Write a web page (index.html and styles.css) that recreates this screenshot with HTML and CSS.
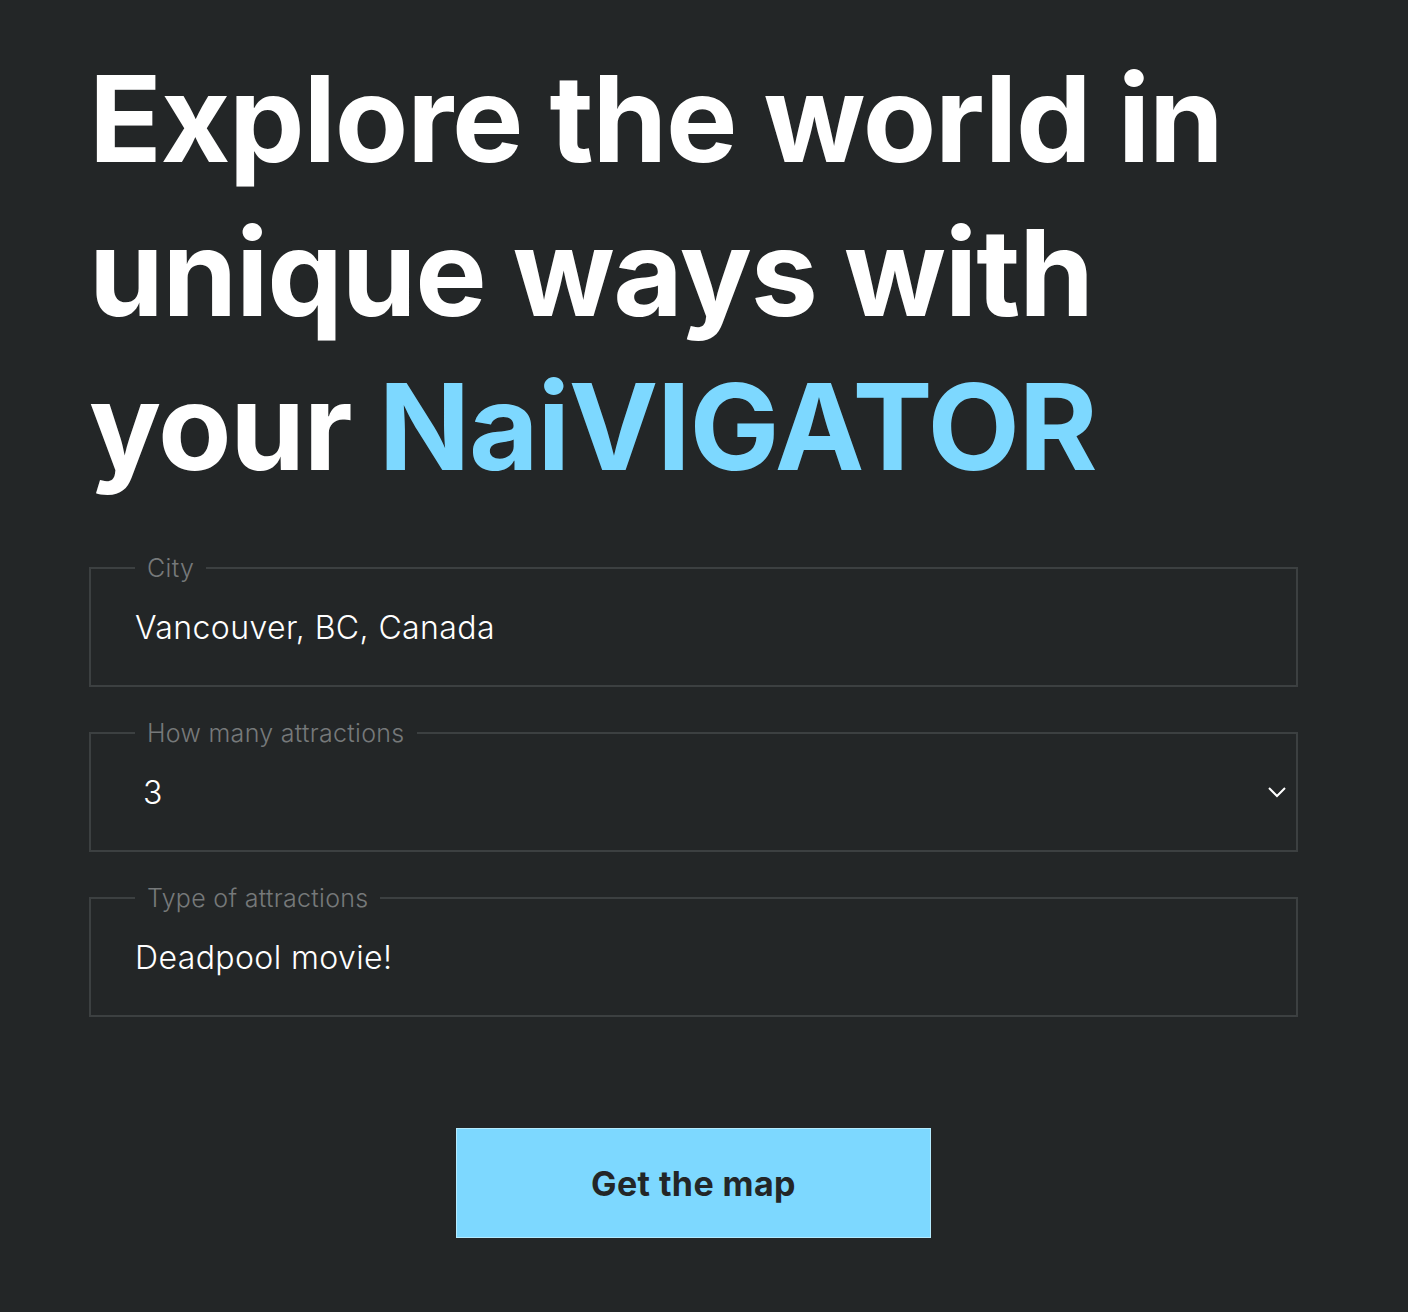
FILE: index.html
```html
<!DOCTYPE html>
<html lang="en">
<head>
<meta charset="utf-8">
<title>NaiVIGATOR</title>
<link rel="stylesheet" href="styles.css">
</head>
<body>
<main class="page">
  <h1 class="hero">Explore the world in unique ways with your <span class="brand">NaiVIGATOR</span></h1>
  <form class="form">
    <fieldset class="field">
      <legend class="field-label">City</legend>
      <div class="field-value">Vancouver, BC, Canada</div>
    </fieldset>
    <fieldset class="field">
      <legend class="field-label">How many attractions</legend>
      <div class="field-value field-select">
        <span class="select-value">3</span>
        <svg class="chevron" width="20" height="12" viewBox="0 0 20 12"><path d="M2 2 L10 10 L18 2" fill="none" stroke="#ffffff" stroke-width="2"/></svg>
      </div>
    </fieldset>
    <fieldset class="field">
      <legend class="field-label">Type of attractions</legend>
      <div class="field-value">Deadpool movie!</div>
    </fieldset>
    <div class="actions">
      <button type="button" class="submit">Get the map</button>
    </div>
  </form>
</main>
</body>
</html>
```

FILE: styles.css
```css
html, body {
  margin: 0;
  padding: 0;
  background: #232627;
}
body {
  font-family: Inter, "Noto Sans", sans-serif;
  color: #ffffff;
  min-height: 1312px;
}
.page {
  padding: 42px 0 0 89px;
  width: 1209px;
}
.hero {
  margin: 0;
  font-size: 120px;
  line-height: 154px;
  font-weight: 700;
  letter-spacing: -1.2px;
  color: #ffffff;
}
.brand {
  color: #7dd8ff;
}
.form {
  margin-top: 52px;
  display: flex;
  flex-direction: column;
  gap: 34px;
}
.field {
  margin: 0;
  border: 2px solid #3c4041;
  padding: 0 44px;
  min-width: 0;
  height: 131px;
  box-sizing: border-box;
}
.field-label {
  padding: 0 12px;
  font-size: 25px;
  line-height: 24px;
  font-weight: 300;
  letter-spacing: 0.3px;
  color: #76797a;
}
.field-value {
  height: 94px;
  display: flex;
  align-items: center;
  font-size: 32px;
  font-weight: 300;
  letter-spacing: 0.4px;
  color: #ffffff;
}
.field-select {
  justify-content: space-between;
  padding-left: 8px;
  margin-right: -35px;
}
.chevron {
  display: block;
}
.actions {
  display: flex;
  justify-content: center;
  margin-top: 77px;
}
.submit {
  width: 475px;
  height: 110px;
  background: #7dd8ff;
  border: 1px solid #b4ebff;
  color: #232627;
  font-family: Inter, "Noto Sans", sans-serif;
  font-size: 34px;
  font-weight: 700;
  letter-spacing: 0.4px;
  padding: 0;
}
```
